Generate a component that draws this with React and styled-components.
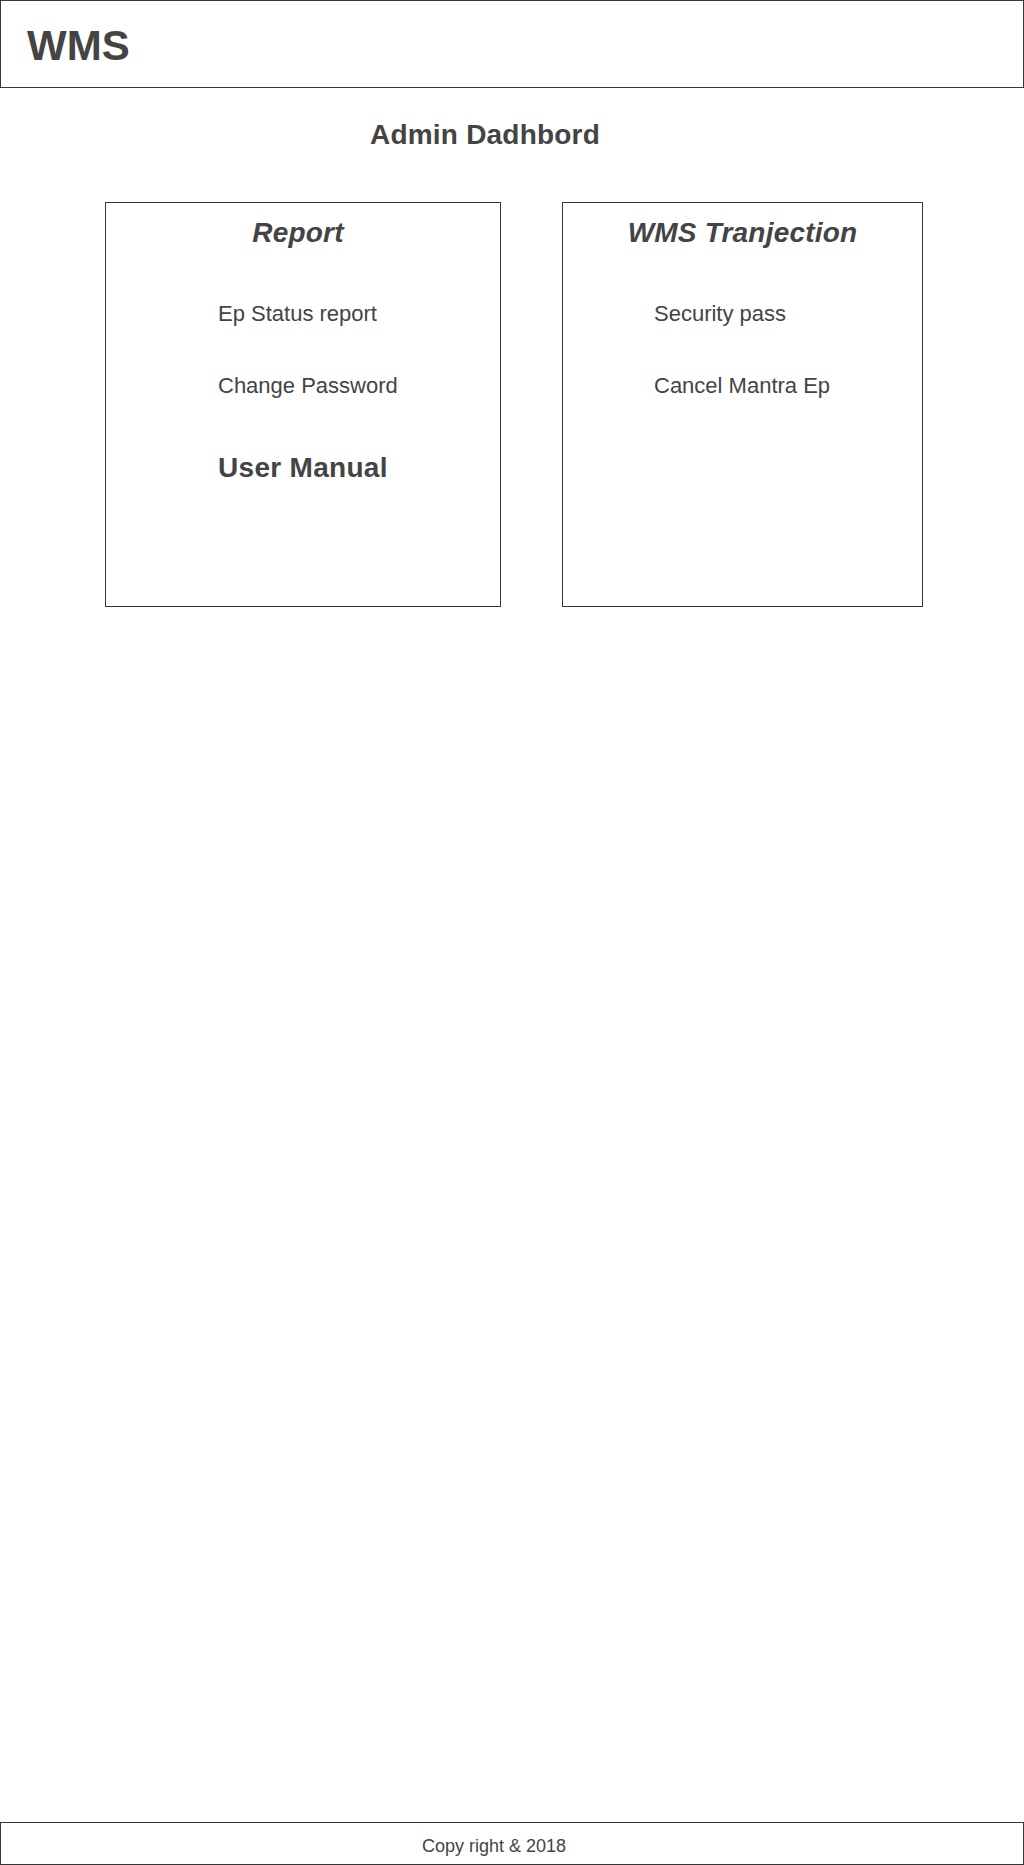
import React from "react";
import styled, { createGlobalStyle } from "styled-components";

const GlobalStyle = createGlobalStyle`
  html, body {
    margin: 0;
    padding: 0;
    background: #fff;
  }
  body {
    font-family: "Liberation Sans", Arial, sans-serif;
    color: #444444;
  }
`;

const Page = styled.div`
  min-height: 1865px;
  display: flex;
  flex-direction: column;
`;

const Header = styled.header`
  height: 88px;
  box-sizing: border-box;
  border: 1px solid #363636;
  padding: 24px 26px 0;
`;

const Brand = styled.h1`
  margin: 0;
  font-size: 42px;
  line-height: 42px;
  font-weight: 700;
`;

const PageTitle = styled.h2`
  margin: 33px 0 0;
  width: 970px;
  text-align: center;
  font-size: 28px;
  line-height: 28px;
  font-weight: 700;
  letter-spacing: 0.2px;
`;

const Cards = styled.div`
  display: flex;
  gap: 61px;
  margin: 53px 0 0 105px;
`;

const Card = styled.section`
  width: ${(p) => p.$width}px;
  height: 405px;
  box-sizing: border-box;
  border: 1px solid #363636;
  padding-top: 16px;
  display: flex;
  flex-direction: column;
`;

const CardTitle = styled.h3`
  margin: 0;
  padding-right: ${(p) => p.$shift || 0}px;
  text-align: center;
  font-size: 28px;
  line-height: 28px;
  font-weight: 700;
  font-style: italic;
  letter-spacing: 0.2px;
`;

const Links = styled.div`
  display: flex;
  flex-direction: column;
  padding-left: ${(p) => p.$indent}px;
  margin-top: 56px;
`;

const LinkItem = styled.a`
  display: block;
  color: inherit;
  text-decoration: none;
  font-size: ${(p) => (p.$big ? 28 : 22)}px;
  line-height: ${(p) => (p.$big ? 28 : 22)}px;
  font-weight: ${(p) => (p.$big ? 700 : 400)};
  letter-spacing: ${(p) => (p.$big ? 0.3 : 0)}px;
  margin-top: ${(p) => (p.$first ? 0 : p.$big ? 57 : 50)}px;
`;

const Footer = styled.footer`
  margin-top: auto;
  height: 43px;
  box-sizing: border-box;
  border: 1px solid #363636;
  padding: 14px 36px 0 0;
  text-align: center;
  font-size: 18px;
  line-height: 18px;
`;

const reportLinks = [
  { label: "Ep Status report" },
  { label: "Change Password" },
  { label: "User Manual", big: true },
];

const wmsLinks = [{ label: "Security pass" }, { label: "Cancel Mantra Ep" }];

export default function App() {
  return (
    <>
      <GlobalStyle />
      <Page>
        <Header>
          <Brand>WMS</Brand>
        </Header>
        <PageTitle>Admin Dadhbord</PageTitle>
        <Cards>
          <Card $width={396}>
            <CardTitle $shift={10}>Report</CardTitle>
            <Links $indent={112}>
              {reportLinks.map((l, i) => (
                <LinkItem key={l.label} href="#" $first={i === 0} $big={l.big}>
                  {l.label}
                </LinkItem>
              ))}
            </Links>
          </Card>
          <Card $width={361}>
            <CardTitle>WMS Tranjection</CardTitle>
            <Links $indent={91}>
              {wmsLinks.map((l, i) => (
                <LinkItem key={l.label} href="#" $first={i === 0}>
                  {l.label}
                </LinkItem>
              ))}
            </Links>
          </Card>
        </Cards>
        <Footer>Copy right &amp; 2018</Footer>
      </Page>
    </>
  );
}
